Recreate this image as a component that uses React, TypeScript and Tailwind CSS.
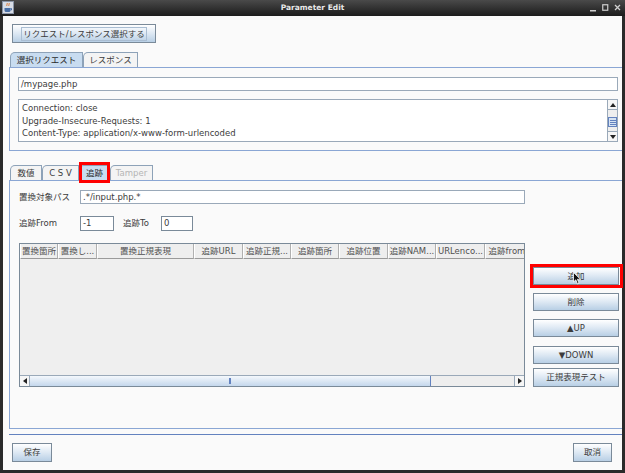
import React from 'react';

const font = "font-['DejaVu_Sans','Noto_Sans_CJK_JP',sans-serif]";

function SwingButton({ children, className = '' }: { children: React.ReactNode; className?: string }) {
  return (
    <div
      className={`relative flex items-center justify-center border border-[#7a8a99] bg-linear-to-b from-[#ffffff] via-[#dde8f3] to-[#b8cfe5] text-[8.5px] text-[#3c3c3c] ${className}`}
    >
      {children}
    </div>
  );
}

function Tab({
  label,
  selected = false,
  disabled = false,
  width,
  children,
}: {
  label: string;
  selected?: boolean;
  disabled?: boolean;
  width: string;
  children?: React.ReactNode;
}) {
  return (
    <div
      className={`relative flex h-[15px] items-center justify-center rounded-tl-[5px] border border-b-0 border-[#8da2b8] text-[8.5px] ${width} ${
        selected ? 'bg-[#c8dcf0] text-[#2a2a2a]' : 'bg-[#f4f4f4] text-[#3c3c3c]'
      } ${disabled ? 'text-[#b4b4b4]' : ''}`}
    >
      {label}
      {children}
    </div>
  );
}

const columns = [
  { label: '置換箇所', w: 'w-[38px]' },
  { label: '置換し...', w: 'w-[39px]' },
  { label: '置換正規表現', w: 'w-[97px]' },
  { label: '追跡URL', w: 'w-[49px]' },
  { label: '追跡正規...', w: 'w-[48px]' },
  { label: '追跡箇所', w: 'w-[48px]' },
  { label: '追跡位置', w: 'w-[49px]' },
  { label: '追跡NAM...', w: 'w-[48px]' },
  { label: 'URLenco...', w: 'w-[49px]' },
  { label: '追跡from', w: 'w-[44px]' },
];

export default function App() {
  return (
    <div className={`flex h-[473px] w-[625px] flex-col overflow-hidden bg-[#2a2a2a] ${font}`}>
      {/* title bar */}
      <div className="relative flex h-[16px] shrink-0 items-center justify-center bg-linear-to-b from-[#4a4a4a] to-[#1c1c1c]">
        <svg className="absolute left-[2px] top-[1px]" width="12" height="13" viewBox="0 0 12 13">
          <rect x="0.5" y="0.5" width="11" height="12" fill="#d8dde6" stroke="#8a94a6" />
          <path d="M5 2c1 1-1 2 0 3M7 2c1 1-1 2 0 3" stroke="#e0762b" strokeWidth="1" fill="none" />
          <path d="M2.5 7h6v2.5c0 1-1 1.5-2 1.5h-2c-1 0-2-.5-2-1.5z" fill="#4a6fa5" />
          <path d="M8.5 7.5h1v1.5h-1" stroke="#4a6fa5" fill="none" />
        </svg>
        <span className="text-[7.5px] font-bold text-[#e8e8e8]">Parameter Edit</span>
        <div className="absolute right-[4px] top-[3px] flex items-center gap-[5px]">
          <svg width="7" height="9" viewBox="0 0 7 9">
            <rect x="0" y="7" width="6" height="1.5" fill="#cfcfcf" />
          </svg>
          <svg width="7" height="9" viewBox="0 0 7 9">
            <rect x="0.75" y="1.75" width="5" height="5.5" fill="none" stroke="#cfcfcf" strokeWidth="1.2" />
          </svg>
          <svg width="7" height="9" viewBox="0 0 7 9">
            <path d="M1 2l5 5M6 2l-5 5" stroke="#cfcfcf" strokeWidth="1.3" />
          </svg>
        </div>
      </div>

      {/* content */}
      <div className="mx-[3px] mb-[3px] flex flex-1 flex-col bg-[#fafafa]">
        <SwingButton className="ml-[9px] mt-[8px] h-[19px] w-[144px]">
          <span className="border border-[#a9bdd2] px-[1px] leading-[12px]">リクエスト/レスポンス選択する</span>
        </SwingButton>

        {/* request/response tabs */}
        <div className="ml-[7px] mt-[9px] flex items-end">
          <Tab label="選択リクエスト" selected width="w-[73px]" />
          <Tab label="レスポンス" width="w-[55px]" />
        </div>
        <div className="ml-[6px] flex h-[84px] flex-col border-y border-l border-[#8aa6d4] pl-[8px] pr-[4px] pt-[9px]">
          <div className="flex h-[14px] items-center border border-[#9aa9b9] bg-white px-[2px] text-[8.5px] text-[#3c3c3c]">
            /mypage.php
          </div>
          <div className="mt-[8px] flex h-[43px] border border-[#9aa9b9] bg-white">
            <div className="flex-1 overflow-hidden px-[3px] pt-[2px] text-[8.5px] leading-[12.5px] text-[#3c3c3c]">
              <div>Connection: close</div>
              <div>Upgrade-Insecure-Requests: 1</div>
              <div>Content-Type: application/x-www-form-urlencoded</div>
              <div>Content-Length: 24</div>
            </div>
            <div className="flex w-[10px] flex-col border-l border-[#9aa9b9] bg-[#eeeeee]">
              <div className="flex h-[10px] items-center justify-center border-b border-[#9aa9b9] bg-[#f6f6f6]">
                <svg width="6" height="4" viewBox="0 0 6 4">
                  <path d="M0 4L3 0L6 4z" fill="#222" />
                </svg>
              </div>
              <div className="h-[7px]" />
              <div className="flex h-[10px] flex-col items-center justify-center gap-[1px] border border-[#6382bf] bg-[#d6e3f2]">
                <div className="h-px w-[6px] bg-[#6382bf]" />
                <div className="h-px w-[6px] bg-[#6382bf]" />
                <div className="h-px w-[6px] bg-[#6382bf]" />
              </div>
              <div className="flex-1" />
              <div className="flex h-[10px] items-center justify-center border-t border-[#9aa9b9] bg-[#f6f6f6]">
                <svg width="6" height="4" viewBox="0 0 6 4">
                  <path d="M0 0L6 0L3 4z" fill="#222" />
                </svg>
              </div>
            </div>
          </div>
        </div>

        {/* tracking tabs */}
        <div className="ml-[7px] mt-[14px] flex items-end">
          <Tab label="数値" width="w-[32px]" />
          <Tab label="C S V" width="w-[37px]" />
          <Tab label="追跡" selected width="w-[31px]">
            <div className="absolute -bottom-[3px] -left-px -right-px -top-[4px] border-[3px] border-[#ff0000]" />
          </Tab>
          <Tab label="Tamper" disabled width="w-[43px]" />
        </div>
        <div className="ml-[6px] flex h-[249px] flex-col border-y border-l border-[#8aa6d4] pl-[9px] pt-[9px] text-[8.5px] text-[#3c3c3c]">
          <div className="flex h-[14px] items-center">
            <span className="w-[61px]">置換対象パス</span>
            <div className="flex h-[14px] w-[445px] items-center border border-[#9aa9b9] bg-white px-[2px]">.*/input.php.*</div>
          </div>
          <div className="mt-[12px] flex h-[15px] items-center">
            <span className="w-[61px]">追跡From</span>
            <div className="flex h-[15px] w-[34px] items-center border border-[#7a8a99] bg-white px-[2px]">-1</div>
            <span className="ml-[9px] w-[38px]">追跡To</span>
            <div className="flex h-[15px] w-[32px] items-center border border-[#7a8a99] bg-white px-[2px]">0</div>
          </div>
          <div className="mt-[12px] flex">
            {/* table */}
            <div className="flex h-[144px] w-[506px] flex-col overflow-hidden border border-[#7a8a99] bg-[#efefef]">
              <div className="flex h-[15px] shrink-0">
                {columns.map((c) => (
                  <div
                    key={c.label}
                    className={`flex shrink-0 items-center justify-center overflow-hidden whitespace-nowrap border-b border-l border-r border-b-[#9a9a9a] border-l-white border-r-[#b0b0b0] bg-[#eeeeee] text-[#505050] ${c.w}`}
                  >
                    {c.label}
                  </div>
                ))}
              </div>
              <div className="flex-1" />
              <div className="flex h-[11px] shrink-0 border-t border-[#9aa9b9] bg-[#eeeeee]">
                <div className="flex w-[10px] items-center justify-center border-r border-[#9aa9b9] bg-[#f6f6f6]">
                  <svg width="4" height="6" viewBox="0 0 4 6">
                    <path d="M4 0L4 6L0 3z" fill="#222" />
                  </svg>
                </div>
                <div className="relative flex w-[401px] items-center justify-center border-r border-[#6382bf] bg-linear-to-b from-[#f4f8fc] to-[#c4d7ec]">
                  <div className="h-[6px] w-[2px] border-x border-[#6382bf] bg-white" />
                </div>
                <div className="flex-1" />
                <div className="flex w-[10px] items-center justify-center border-l border-[#9aa9b9] bg-[#f6f6f6]">
                  <svg width="4" height="6" viewBox="0 0 4 6">
                    <path d="M0 0L4 3L0 6z" fill="#222" />
                  </svg>
                </div>
              </div>
            </div>

            {/* side buttons */}
            <div className="ml-[8px] flex w-[86px] flex-col pt-[24px]">
              <SwingButton className="h-[18px]">
                追加
                <div className="absolute -bottom-[4px] -left-[4px] -right-[5px] -top-[4px] border-[3px] border-[#ff0000]" />
                <svg className="absolute left-[39px] top-[4px]" width="8" height="13" viewBox="0 0 8 13">
                  <path d="M0.5 0.5L0.5 10L2.8 7.8L4.5 12L6 11.3L4.4 7.3L7.5 7.3z" fill="#111" stroke="#fff" strokeWidth="0.8" />
                </svg>
              </SwingButton>
              <SwingButton className="mt-[8px] h-[18px]">削除</SwingButton>
              <SwingButton className="mt-[8px] h-[18px]">▲UP</SwingButton>
              <SwingButton className="mt-[9px] h-[18px]">▼DOWN</SwingButton>
              <SwingButton className="mt-[4px] h-[19px]">正規表現テスト</SwingButton>
            </div>
          </div>
        </div>

        {/* separator */}
        <div className="ml-[6px] mt-[5px] h-px bg-[#6382bf]" />

        <div className="mt-[8px] flex justify-between pl-[9px] pr-[10px]">
          <SwingButton className="h-[19px] w-[40px]">保存</SwingButton>
          <SwingButton className="h-[19px] w-[39px]">取消</SwingButton>
        </div>
      </div>
    </div>
  );
}
